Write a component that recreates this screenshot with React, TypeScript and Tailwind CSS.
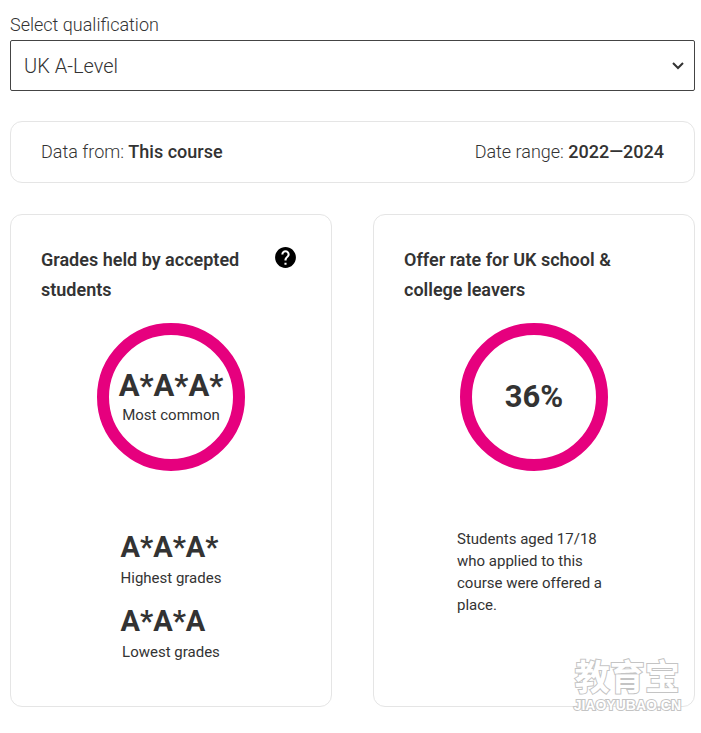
import { MdHelp } from 'react-icons/md'

function Ring({ children }: { children: React.ReactNode }) {
  return (
    <div className="mx-auto mt-[18px] flex size-[148px] flex-col items-center justify-center rounded-full border-12 border-[#e6007e]">
      {children}
    </div>
  )
}

export default function App() {
  return (
    <main className="bg-white pt-2.5 pr-1.5 pb-6 pl-2.5 font-['Roboto',sans-serif] text-[#333]">
      <label
        htmlFor="qualification"
        className="block text-lg leading-[30px] font-light"
      >
        Select qualification
      </label>
      <div className="grid items-center">
        <select
          id="qualification"
          className="col-start-1 row-start-1 h-[51px] w-full appearance-none rounded-xs border border-[#444] bg-white px-[13px] text-xl font-light"
        >
          <option>UK A-Level</option>
        </select>
        <svg
          viewBox="0 0 12 8"
          className="pointer-events-none col-start-1 row-start-1 mr-[11px] h-2 w-3 justify-self-end"
          fill="none"
          stroke="#333"
          strokeWidth="2"
        >
          <path d="M1 1 6 6 11 1" />
        </svg>
      </div>

      <div className="mt-[30px] flex flex-wrap justify-between rounded-xl border border-[#e5e5e5] px-[30px] py-[15px] text-lg leading-[30px] font-light">
        <p>
          Data from: <strong className="font-medium">This course</strong>
        </p>
        <p>
          Date range: <strong className="font-medium">2022—2024</strong>
        </p>
      </div>

      <div className="relative mt-[31px] grid grid-cols-2 gap-[41px]">
        <section className="rounded-xl border border-[#e5e5e5] px-[30px] pt-[30px] pb-[43px]">
          <div className="flex items-start justify-between">
            <h2 className="max-w-[210px] text-lg leading-[30px] font-semibold">
              Grades held by accepted students
            </h2>
            <button type="button" aria-label="Help" className="mr-[3px]">
              <MdHelp size={25} className="text-black" />
            </button>
          </div>
          <Ring>
            <p className="text-[31px] leading-9 font-bold">A*A*A*</p>
            <p className="text-[15px] leading-[22px]">Most common</p>
          </Ring>
          <div className="mx-auto mt-14 w-fit">
            <p className="text-[29px] leading-10 font-bold">A*A*A*</p>
            <p className="text-center text-[15px] leading-[22px]">
              Highest grades
            </p>
            <p className="mt-3 text-[29px] leading-10 font-bold">A*A*A</p>
            <p className="text-center text-[15px] leading-[22px]">
              Lowest grades
            </p>
          </div>
        </section>

        <section className="rounded-xl border border-[#e5e5e5] px-[30px] pt-[30px] pb-[42px]">
          <h2 className="text-lg leading-[30px] font-semibold">
            Offer rate for UK school & college leavers
          </h2>
          <Ring>
            <p className="text-[31px] leading-9 font-bold">36%</p>
          </Ring>
          <p className="mx-auto mt-[57px] max-w-[154px] text-[15px] leading-[22px]">
            Students aged 17/18 who applied to this course were offered a place.
          </p>
        </section>

        <div className="absolute right-3.5 -bottom-1 flex flex-col items-center gap-2 font-bold text-white [paint-order:stroke_fill] [-webkit-text-stroke:2px_#c4c4c4]">
          <span className="font-['Noto_Sans_CJK_SC',sans-serif] text-[35px] leading-8">
            教育宝
          </span>
          <span className="font-['Liberation_Sans',sans-serif] text-sm leading-3">
            JIAOYUBAO.CN
          </span>
        </div>
      </div>
    </main>
  )
}
